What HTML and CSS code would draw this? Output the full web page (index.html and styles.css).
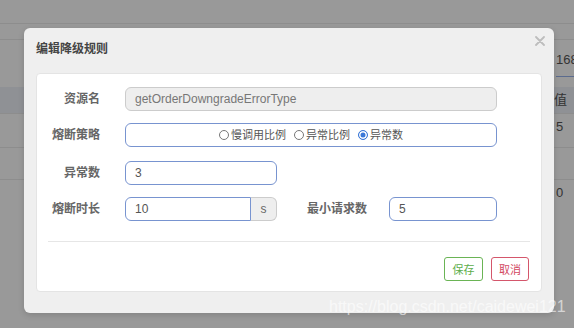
FILE: index.html
```html
<!DOCTYPE html>
<html lang="zh-CN">
<head>
    <meta charset="UTF-8">
    <meta name="viewport" content="width=device-width, initial-scale=1.0">
    <title>编辑降级规则</title>
    <link rel="stylesheet" href="styles.css">
</head>
<body>
    <!-- page behind the dialog (already dimmed) -->
    <div class="bg">
        <div class="bg-row r1"></div>
        <div class="bg-row r2"></div>
        <div class="bg-row r3"><div class="bg-cell bg-input">168.1</div></div>
        <div class="bg-row r4 head"><div class="bg-cell shift">值</div></div>
        <div class="bg-row r5"><div class="bg-cell">5</div></div>
        <div class="bg-row r6"></div>
        <div class="bg-row r7"><div class="bg-cell">0</div></div>
    </div>

    <div class="modal">
        <div class="modal-header">
            <span class="modal-title">编辑降级规则</span>
        </div>
        <svg class="close" width="10" height="10" viewBox="0 0 10 10">
            <path d="M1 1L9 9M9 1L1 9" stroke="#bdbdbd" stroke-width="1.8" stroke-linecap="round"/>
        </svg>

        <div class="modal-body">
            <div class="form">
                <div class="form-row">
                    <label class="label">资源名</label>
                    <div class="input input-long disabled">getOrderDowngradeErrorType</div>
                </div>
                <div class="form-row radio-row">
                    <label class="label">熔断策略</label>
                    <div class="input input-long radio-group">
                        <span class="radio"><i class="dot"></i>慢调用比例</span>
                        <span class="radio"><i class="dot"></i>异常比例</span>
                        <span class="radio"><i class="dot checked"></i>异常数</span>
                    </div>
                </div>
                <div class="form-row">
                    <label class="label">异常数</label>
                    <div class="input input-mid">3</div>
                </div>
                <div class="form-row">
                    <label class="label">熔断时长</label>
                    <div class="input-group">
                        <div class="input input-left">10</div>
                        <div class="addon">s</div>
                    </div>
                    <label class="label label-wide">最小请求数</label>
                    <div class="input input-short">5</div>
                </div>
            </div>

            <div class="divider"></div>

            <div class="footer">
                <button class="btn btn-save">保存</button>
                <button class="btn btn-cancel">取消</button>
            </div>
        </div>
    </div>

    <div class="watermark">https://blog.csdn.net/caidewei121</div>
</body>
</html>
```

FILE: styles.css
```css
body {
    margin: 0;
    width: 574px;
    height: 328px;
    overflow: hidden;
    position: relative;
    background-color: #999;
    font-family: "Liberation Sans", "Noto Sans CJK SC", sans-serif;
    color: #555;
}

/* dimmed page */
.bg-row {
    display: flex;
    justify-content: flex-end;
    border-bottom: 1px solid #8d8d8d;
    box-sizing: border-box;
}
.r1 { height: 24px; }
.r2 { height: 16px; }
.r3 { height: 47px; border-bottom: none; }
.r4 { height: 27px; }
.r5 { height: 34px; }
.r6 { height: 32px; }
.r7 { height: 60px; border-bottom: none; }
.head {
    background-color: #8f9195;
}
.bg-cell {
    width: 18px;
    overflow: hidden;
    white-space: nowrap;
    font-size: 13px;
    color: #333;
    line-height: 26px;
}
.bg-input {
    height: 36px;
    line-height: 40px;
    border-bottom: 1px solid #5b6b8e;
}
.shift {
    width: 20px;
}

/* dialog */
.modal {
    position: absolute;
    left: 24px;
    top: 28px;
    width: 530px;
    height: 285px;
    background-color: #efefef;
    border-radius: 6px;
    box-shadow: 0 2px 6px rgba(0, 0, 0, 0.15);
}
.modal-header {
    height: 45px;
    padding: 13px 12px 0;
    box-sizing: border-box;
}
.modal-title {
    display: block;
    font-size: 12px;
    line-height: 16px;
    font-weight: bold;
    color: #444;
}
.close {
    position: absolute;
    top: 8px;
    right: 9px;
}
.modal-body {
    margin: 0 12px;
    height: 219px;
    box-sizing: border-box;
    background-color: #fff;
    border: 1px solid #e4e4e4;
    border-radius: 4px;
    padding: 13px 11px 0;
}

.form-row {
    display: flex;
    align-items: center;
    height: 24px;
    margin-bottom: 12px;
}
.radio-row {
    margin-bottom: 14px;
}
.form-row:last-child {
    margin-bottom: 0;
}
.label {
    width: 52px;
    margin-right: 25px;
    text-align: right;
    font-size: 12px;
    font-weight: bold;
    color: #666;
    line-height: 24px;
}
.label-wide {
    width: 90px;
    margin-right: 22px;
}

.input {
    box-sizing: border-box;
    height: 24px;
    line-height: 22px;
    padding-left: 9px;
    border: 1px solid #7894d0;
    border-radius: 6px;
    font-size: 12px;
    color: #555;
    background-color: #fff;
}
.input-long { width: 372px; }
.input-mid { width: 152px; }
.input-short { width: 108px; }
.disabled {
    background-color: #eee;
    border-color: #ccc;
    color: #777;
}

.input-group {
    display: flex;
    width: 152px;
}
.input-left {
    width: 126px;
    border-radius: 6px 0 0 6px;
}
.addon {
    box-sizing: border-box;
    width: 26px;
    height: 24px;
    line-height: 22px;
    text-align: center;
    font-size: 12px;
    color: #666;
    background-color: #eee;
    border: 1px solid #ccc;
    border-left: none;
    border-radius: 0 6px 6px 0;
}

.radio-group {
    display: flex;
    align-items: center;
    justify-content: center;
    padding-left: 0;
}
.radio {
    display: flex;
    align-items: center;
    font-size: 11px;
    color: #555;
    margin-right: 8px;
}
.radio:last-child {
    margin-right: 0;
}
.dot {
    box-sizing: border-box;
    width: 10px;
    height: 10px;
    margin-right: 2px;
    border: 1px solid #777;
    border-radius: 50%;
    background-color: #fff;
}
.dot.checked {
    border-color: #3b78d8;
    background-color: #3b78d8;
    box-shadow: inset 0 0 0 1.5px #fff;
}

.divider {
    margin-top: 20px;
    height: 1px;
    background-color: #e6e6e6;
}
.footer {
    display: flex;
    justify-content: flex-end;
    gap: 8px;
    padding-top: 15px;
    padding-right: 1px;
}
.btn {
    height: 24px;
    padding: 0;
    font-family: "Liberation Sans", "Noto Sans CJK SC", sans-serif;
    font-size: 11px;
    background-color: #fff;
    border: 1px solid;
    border-radius: 3px;
    cursor: pointer;
}
.btn-save {
    width: 39px;
    color: #5cad4a;
    border-color: #6ab455;
}
.btn-cancel {
    width: 38px;
    color: #d2475f;
    border-color: #d4566b;
}

.watermark {
    position: absolute;
    left: 329px;
    top: 298px;
    font-size: 16px;
    line-height: 18px;
    color: rgba(255, 255, 255, 0.6);
    white-space: nowrap;
}
```
